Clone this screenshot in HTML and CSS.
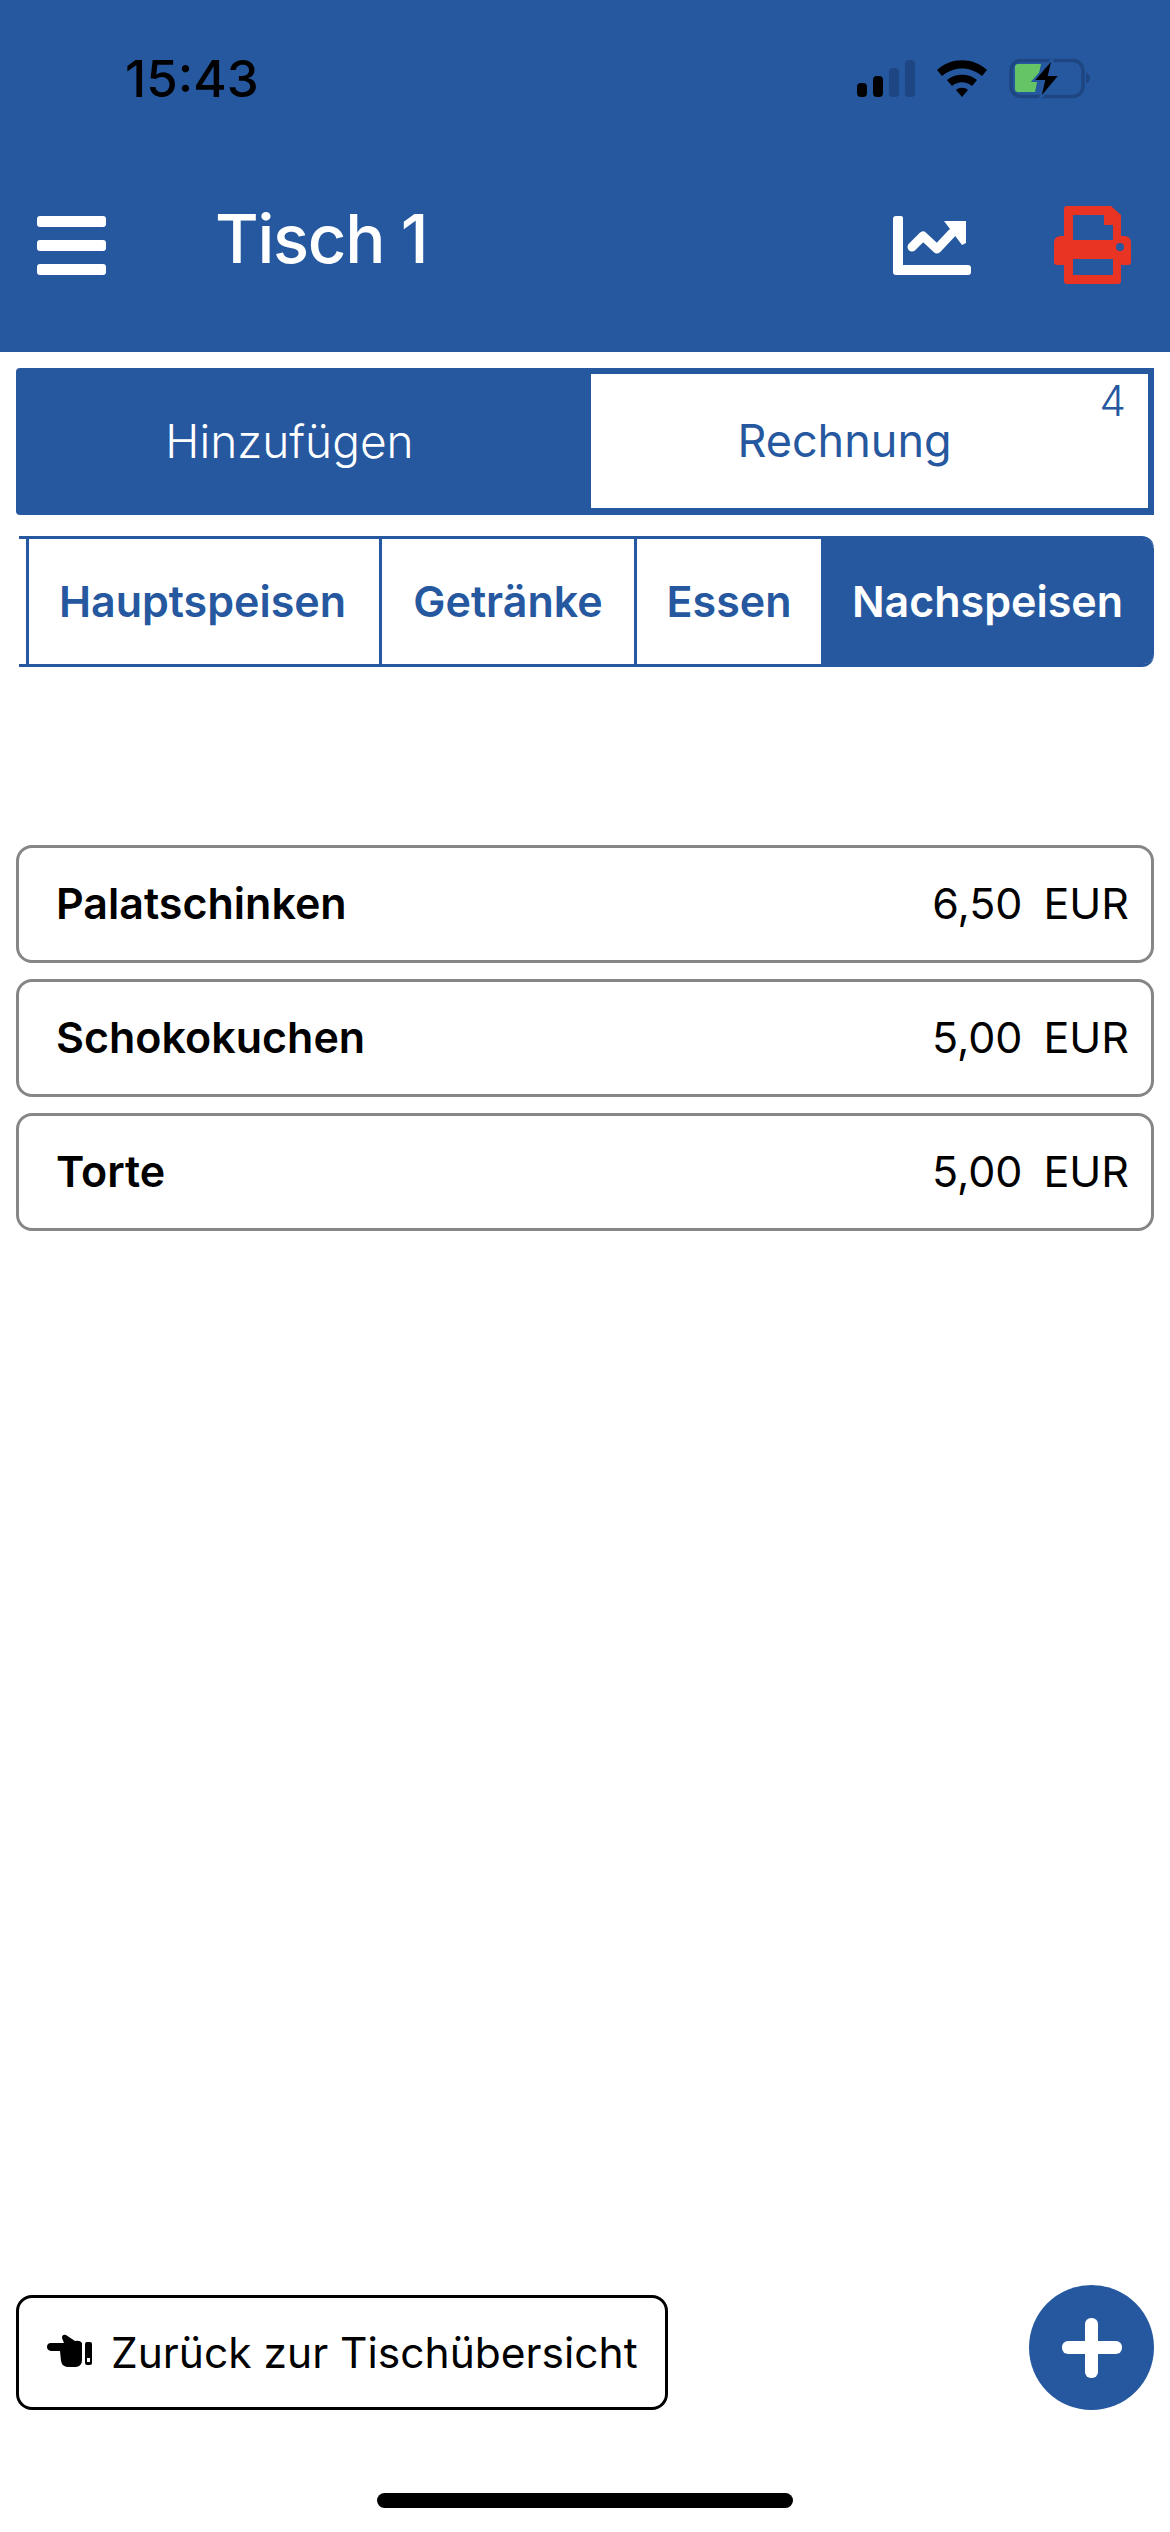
FILE: index.html
```html
<!DOCTYPE html>
<html lang="de">
<head>
    <meta charset="UTF-8">
    <meta name="viewport" content="width=device-width, initial-scale=1.0">
    <title>Tisch 1</title>
    <link rel="stylesheet" href="styles.css">
</head>
<body>
    <div class="app">
        <header class="header">
            <div class="status-bar">
                <span class="clock">15:43</span>
                <div class="status-icons">
                    <svg class="signal-icon" width="58" height="37" viewBox="0 0 58 37">
                        <rect x="0" y="23" width="10" height="14" rx="4" fill="#000"/>
                        <rect x="16" y="16" width="10" height="21" rx="4" fill="#000"/>
                        <rect x="32" y="8" width="10" height="29" rx="4" fill="#1d4682"/>
                        <rect x="48" y="0" width="10" height="37" rx="4" fill="#1d4682"/>
                    </svg>
                    <svg class="wifi-icon" width="50" height="37" viewBox="0 0 50 37">
                        <path d="M0 10 C14 -3 36 -3 50 10 L45 16 C33 6 17 6 5 16 Z" fill="#000"/>
                        <path d="M10 20 C18 13 32 13 40 20 L35 26 C29 21 21 21 15 26 Z" fill="#000"/>
                        <path d="M19 30 C22 27 28 27 31 30 L25 37 Z" fill="#000"/>
                    </svg>
                    <svg class="battery-icon" width="82" height="41" viewBox="0 0 82 41">
                        <rect x="2" y="2.5" width="72" height="36" rx="10" fill="none" stroke="#1d4682" stroke-width="3.5"/>
                        <path d="M6 9 Q6 6 9 6 L32 6 L26 34 L9 34 Q6 34 6 31 Z" fill="#65c466"/>
                        <path d="M77 14 Q81 17 81 20 Q81 23 77 26 Z" fill="#1d4682"/>
                        <path d="M44 0 L24 23 L35 23 L31 41 L51 17 L40 17 Z" fill="#000" stroke="#26589f" stroke-width="2"/>
                    </svg>
                </div>
            </div>
            <div class="toolbar">
                <div class="menu-icon"><span></span><span></span><span></span></div>
                <h1 class="title">Tisch 1</h1>
                <svg class="chart-icon" width="78" height="59" viewBox="0 0 78 59">
                    <path d="M3 0 H8 Q10 0 10 2 V49 H75 Q78 49 78 52 V56 Q78 59 75 59 H3 Q0 59 0 56 V3 Q0 0 3 0 Z" fill="#fff"/>
                    <path d="M19 31 L30 20 L44 33 L59 17" fill="none" stroke="#fff" stroke-width="9" stroke-linejoin="round" stroke-linecap="round"/>
                    <path d="M51 5 H73 V27 L69 29 Z" fill="#fff"/>
                </svg>
                <svg class="printer-icon" width="77" height="78" viewBox="0 0 77 78">
                    <path fill-rule="evenodd" fill="#e93323" d="M10 3 Q10 0 13 0 H57 L67 9 V30 H70 Q77 30 77 37 V56 Q77 59 74 59 H67 V75 Q67 78 64 78 H13 Q10 78 10 75 V59 H3 Q0 59 0 56 V37 Q0 30 7 30 H10 Z M19 9 V34 H59 V19 H50 V9 Z M19 53 V69 H59 V53 Z M66 37 A4 4 0 1 0 66 45 A4 4 0 1 0 66 37 Z"/>
                </svg>
            </div>
        </header>

        <div class="mode-tabs">
            <div class="mode-tab">Hinzufügen</div>
            <div class="mode-tab active">Rechnung<span class="count">4</span></div>
        </div>

        <div class="category-tabs">
            <div class="category-tab hauptspeisen">Hauptspeisen</div>
            <div class="category-tab getraenke">Getränke</div>
            <div class="category-tab essen">Essen</div>
            <div class="category-tab selected">Nachspeisen</div>
        </div>

        <div class="item-list">
            <div class="item"><span class="item-name">Palatschinken</span><span class="item-price">6,50<span class="currency">EUR</span></span></div>
            <div class="item"><span class="item-name">Schokokuchen</span><span class="item-price">5,00<span class="currency">EUR</span></span></div>
            <div class="item"><span class="item-name">Torte</span><span class="item-price">5,00<span class="currency">EUR</span></span></div>
        </div>

        <div class="footer-actions">
            <div class="back-btn">
                <svg class="hand-icon" width="45" height="33" viewBox="0 0 45 33">
                    <path fill="#000" d="M4 9 H17 L15 4 Q15 0 19 1 L28 7 Q33 6 35 9 V26 Q35 32 29 33 H22 Q15 33 14 27 L13 17 H4 Q0 16 0 13 Q0 9 4 9 Z"/>
                    <path fill="#000" fill-rule="evenodd" d="M38 10 Q38 8 40 8 H43 Q45 8 45 10 V29 Q45 31 43 31 H40 Q38 31 38 29 Z M40 24 V28 H43 V24 Z"/>
                </svg>
                <span>Zurück zur Tischübersicht</span>
            </div>
            <div class="add-btn"><span class="plus-h"></span><span class="plus-v"></span></div>
        </div>

        <div class="home-indicator"></div>
    </div>
</body>
</html>
```

FILE: styles.css
```css
* {
    box-sizing: border-box;
}
body {
    margin: 0;
    background: #fff;
    font-family: Inter, Roboto, 'Liberation Sans', sans-serif;
    color: #000;
}
.app {
    width: 1170px;
    height: 2532px;
    display: flex;
    flex-direction: column;
}
.header {
    height: 352px;
    background: #26589f;
    padding-left: 37px;
}
.status-bar {
    height: 154px;
    padding: 50px 79px 0 88px;
    display: flex;
    justify-content: space-between;
    align-items: flex-start;
}
.clock {
    font-size: 51px;
    line-height: 54px;
    font-weight: 500;
    margin-top: 2px;
}
.status-icons {
    display: flex;
    align-items: center;
    gap: 22px;
    margin-top: 8px;
}
.toolbar {
    display: flex;
    align-items: flex-start;
    padding-top: 62px;
}
.menu-icon {
    width: 69px;
    display: flex;
    flex-direction: column;
    gap: 13px;
}
.menu-icon span {
    display: block;
    height: 11px;
    background: #fff;
    border-radius: 3px;
}
.title {
    margin: -13px 0 0 109px;
    width: 678px;
    font-size: 67px;
    line-height: 72px;
    font-weight: 500;
    letter-spacing: -1.3px;
    color: #fff;
}
.printer-icon {
    margin: -10px 0 0 83px;
}
.mode-tabs {
    margin: 16px 16px 0 16px;
    height: 147px;
    display: flex;
    background: #26589f;
    border-radius: 4px 0 0 4px;
}
.mode-tab {
    flex: 0 0 575px;
    padding: 0 28px 2px 0;
    display: flex;
    align-items: center;
    justify-content: center;
    font-size: 46px;
    font-weight: 300;
    color: #fff;
}
.mode-tab.active {
    position: relative;
    flex: 1;
    margin: 6px 6px 7px 0;
    padding: 0 50px 2px 0;
    background: #fff;
    color: #26589f;
    font-size: 45px;
    font-weight: 400;
}
.count {
    position: absolute;
    top: 1px;
    right: 22px;
    font-size: 42px;
    font-weight: 300;
}
.category-tabs {
    margin: 21px 16px 0 19px;
    height: 131px;
    display: flex;
    border: solid #26589f;
    border-width: 3px 0;
    border-radius: 0 12px 12px 0;
    padding-left: 7px;
}
.category-tab {
    padding-bottom: 2px;
    display: flex;
    align-items: center;
    justify-content: center;
    font-size: 43px;
    font-weight: 600;
    color: #26589f;
    border-left: 3px solid #26589f;
}
.hauptspeisen {
    flex: 0 0 353px;
    padding-right: 3px;
}
.getraenke {
    flex: 0 0 255px;
}
.essen {
    flex: 0 0 187px;
}
.category-tab.selected {
    flex: 1;
    background: #26589f;
    color: #fff;
    border-left: none;
    border-radius: 0 10px 10px 0;
}
.item-list {
    margin: 178px 16px 0 16px;
    display: flex;
    flex-direction: column;
    gap: 16px;
}
.item {
    height: 118px;
    padding: 0 22px 3px 37px;
    display: flex;
    align-items: center;
    justify-content: space-between;
    border: 3px solid #868686;
    border-radius: 16px;
    font-size: 43px;
}
.item-name {
    font-weight: 600;
}
.currency {
    margin-left: 21px;
}
.footer-actions {
    margin: auto 16px 0 16px;
    display: flex;
    align-items: flex-end;
    justify-content: space-between;
}
.back-btn {
    width: 652px;
    height: 115px;
    padding-left: 28px;
    display: flex;
    align-items: center;
    gap: 19px;
    border: 3px solid #000;
    border-radius: 16px;
    font-size: 42.5px;
}
.hand-icon {
    margin-top: -5px;
}
.add-btn {
    position: relative;
    width: 125px;
    height: 125px;
    border-radius: 50%;
    background: #26589f;
}
.plus-h,
.plus-v {
    position: absolute;
    background: #fff;
    border-radius: 6px;
}
.plus-h {
    left: 33px;
    top: 56px;
    width: 60px;
    height: 13px;
}
.plus-v {
    left: 56px;
    top: 33px;
    width: 13px;
    height: 60px;
}
.home-indicator {
    align-self: center;
    width: 416px;
    height: 15px;
    margin: 83px 0 24px;
    background: #000;
    border-radius: 8px;
}
```
